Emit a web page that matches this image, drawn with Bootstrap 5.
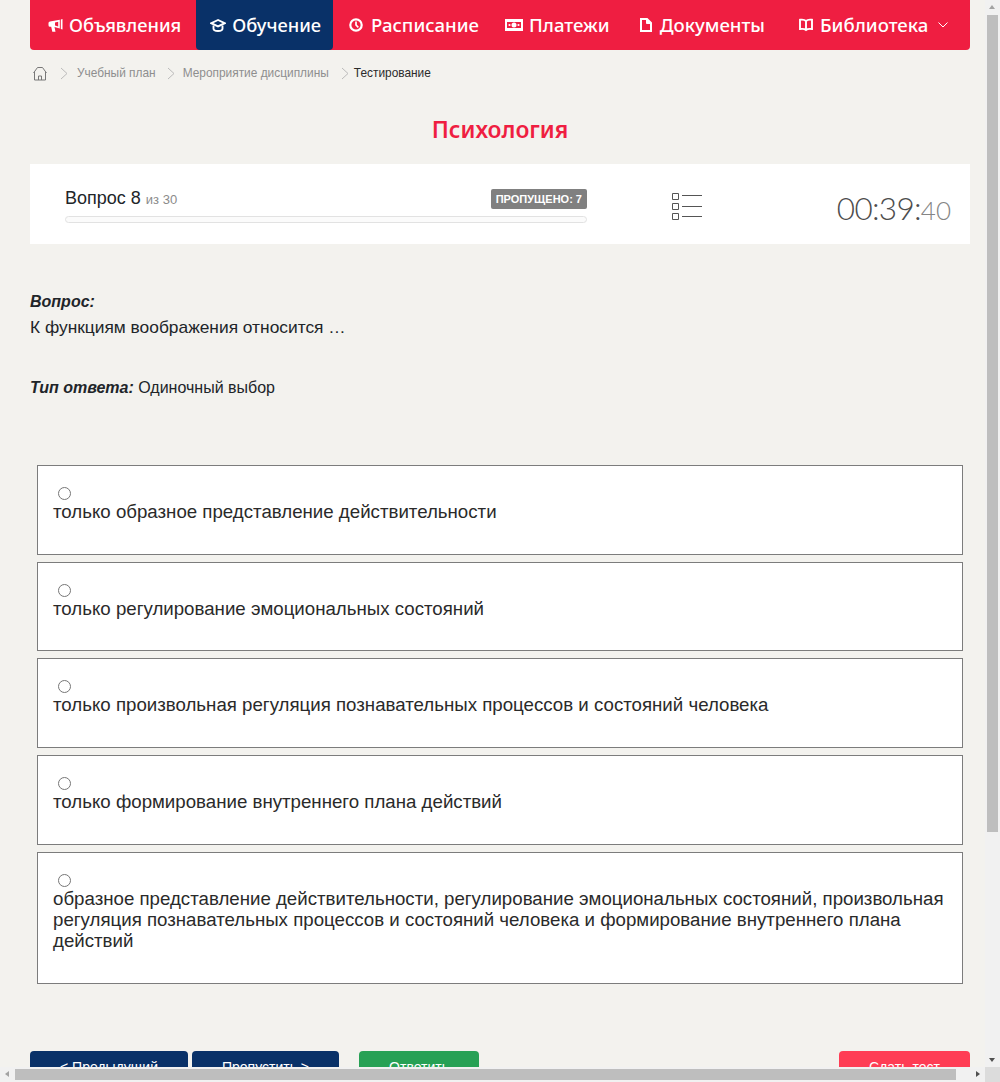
<!DOCTYPE html>
<html lang="ru">
<head>
<meta charset="utf-8">
<title>Тестирование</title>
<link href="https://cdn.jsdelivr.net/npm/bootstrap@5.3.0/dist/css/bootstrap.min.css" rel="stylesheet">
<style>
html,body{background:#f3f2ee;overflow:hidden;height:100%}
body{font-family:"Liberation Sans",Arial,sans-serif;color:#212529}
.pg{width:1000px;height:1082px;overflow:hidden;padding:0 30px}
.topnav{height:50px;background:#ef1e41;border-radius:0 0 4px 4px;padding-left:4px}
.topnav a{display:flex;align-items:center;height:50px;padding:0 14px;color:#fff;text-decoration:none;font:500 18.6px/1 "Noto Sans",sans-serif;border-radius:0 0 4px 4px;white-space:nowrap}
.topnav a svg{flex:none}
.topnav a.tgt{font-size:18.3px;padding-right:15px}
.topnav a.cur{background:#093168;padding-right:12px}
.topnav a.n3{margin-left:2px;padding-right:12px}
.n2{margin-left:2px}.n6{margin-left:6px}
.i6{margin-right:6px}.i7{margin-right:7px}.i8{margin-right:8px}.c10{margin-left:10px}
.crumbs{height:46px;font-size:11.9px;color:#8e8e8e;padding-left:3px}
.crumbs span{padding-top:1px}
.sp1{margin:0 9px 0 13px}.sp2{margin:0 8px 0 11px}.sp3{margin:0 5px 0 12px}
.crumbs .now{color:#2b2b2b}
.ttl{color:#ef1e41;font:600 22.8px/1 "Noto Sans",sans-serif;text-align:center;margin:0;padding:23px 0 22px}
.stat{height:80px;background:#fff;padding:2px 19px 0 35px}
.stat-l{width:522px}
.q-num{font-size:18px;line-height:21px;position:relative;top:1px}
.q-num span{font-size:13px;color:#8b8b8b}
.skip{background:#808080;color:#fff;font-size:11px;font-weight:700;border-radius:2px;padding:0 5px;line-height:20px}
.track{height:7px;border:1px solid #e2e2e2;border-radius:4px;margin-top:7px;background:#fbfbfb}
.timer{font:300 31.5px/1 Lato,sans-serif;color:#4d4d4d;margin-left:auto;margin-top:8px;letter-spacing:-.7px}
.timer span{font-size:26px;color:#858585;letter-spacing:0}
.listico{margin-left:85px;margin-top:3px}
.qtxt{font-size:17.35px;line-height:25px;padding-top:45px}
.qtxt b{font-size:16px}
.qline{display:block;margin-top:1px}
.anstype{font-size:16px;line-height:26px;margin-top:35px}
.opts{padding:0 7px;margin-top:64px}
.opt{background:#fff;border:1px solid #7c7c7c;margin-bottom:7px;padding:21px 15px 0;font-size:18.68px;line-height:21px;height:89.8px;color:#2a2a2a}
.opt.tall{height:132px}
.opt input{display:block;width:13px;height:13px;margin:0 0 0 5px;accent-color:#777}
.opt label{display:block;margin-top:1px}
.acts{margin-top:67px}
.bt{height:34px;border:0;border-radius:4px;color:#fff;font-size:14px;padding:0;display:block}
.bt-n{background:#093168}
.bt-g{background:#27a155;margin-left:20px}
.bt-r{background:#ff3d55}
.w158{width:158px}.w147{width:147px}.w120{width:120px}.w131{width:131px}
.vbar{position:fixed;top:0;right:0;width:15px;height:1067px;background:#f1f1f1}
.vthumb{position:absolute;top:15px;left:2px;width:11px;height:817px;background:#bebebe}
.hbar{position:fixed;left:0;bottom:0;width:985px;height:15px;background:#f1f1f1}
.hthumb{position:absolute;left:15px;top:2px;width:941px;height:11px;background:#bebebe}
.corner{position:fixed;right:0;bottom:0;width:15px;height:15px;background:#dcdcdc}
.tri{position:absolute;width:0;height:0;border-style:solid;border-color:transparent}
.tu{left:4px;top:5px;border-width:0 3.5px 4px;border-bottom-color:#a3a3a3}
.td{left:4px;bottom:5px;border-width:4px 3.5px 0;border-top-color:#505050}
.tl{left:5px;top:4px;border-width:3.5px 4px 3.5px 0;border-right-color:#a3a3a3}
.tr{right:5px;top:4px;border-width:3.5px 0 3.5px 4px;border-left-color:#505050}
</style>
</head>
<body>
<div class="pg">
  <nav class="topnav d-flex">
    <a href="#" class="tgt"><svg class="i6" width="15" height="15" viewBox="0 0 15 15" fill="#fff"><path d="M14.500 1v10.500L12.800 11V1.500zM11.800 1.800v8.600L6.500 9l1 4.800H4.300L3.200 8.800H2A1.500 1.500 0 0 1 .5 7.300V5a1.500 1.500 0 0 1 1.500-1.500zM7 4.500v3l3.200.9V3.700z" fill-rule="evenodd"/></svg>Объявления</a>
    <a href="#" class="tgt cur"><svg class="i6" width="16" height="15" viewBox="0 0 16 15" fill="none" stroke="#fff" stroke-width="1.900"><path d="M8 2 1.300 5.200 8 8.400l6.700-3.200z"/><path d="M3.500 7.500v3.300c0 2.900 9 2.900 9 0V7.500"/></svg>Обучение</a>
    <a href="#" class="n3"><svg class="i8" width="14" height="14" viewBox="0 0 14 14" fill="none" stroke="#fff" stroke-width="2.200"><circle cx="7" cy="7" r="5.700"/><path d="M7 3.500V7l2.300 2.300" stroke-width="1.700"/></svg>Расписание</a>
    <a href="#"><svg class="i6" width="18" height="12" viewBox="0 0 18 12"><path fill="#fff" fill-rule="evenodd" d="M0 0h18v12H0zM2 3v6h14V3z"/><circle cx="9" cy="6" r="2.500" fill="#fff"/><circle cx="4.500" cy="6" r="1.100" fill="#fff"/><circle cx="13.500" cy="6" r="1.100" fill="#fff"/></svg>Платежи</a>
    <a href="#" class="n2"><svg class="i8" width="12" height="14" viewBox="0 0 12 14" fill="none" stroke="#fff" stroke-width="2"><path d="M1 1h6l4 4v8H1z"/><path d="M6.500 .5v5h5" fill="#fff" stroke-width="1"/></svg>Документы</a>
    <a href="#" class="n6"><svg class="i7" width="14" height="14" viewBox="0 0 14 14" fill="none" stroke="#fff" stroke-width="1.900"><path d="M7 3C5.500 1.500 3 1.500 1 1.800V11c2-.3 4.500-.3 6 1 1.500-1.300 4-1.300 6-1V1.800C11 1.500 8.500 1.500 7 3zM7 3v9"/></svg>Библиотека<svg class="c10" width="10" height="6" viewBox="0 0 10 6" fill="none" stroke="#fff"><path d="m.5.500 4.500 4.500L9.500.500"/></svg></a>
  </nav>

  <div class="crumbs d-flex align-items-center">
    <svg width="14" height="15" viewBox="0 0 14 15" fill="none" stroke="#777" stroke-width="1"><path d="M.5 7 4.500 1.500h5L13.500 7M1.500 6v8h11V6M5.500 14v-4h3v4"/></svg>
    <svg class="sp1" width="8" height="13" viewBox="0 0 8 13" fill="none" stroke="#bbb"><path d="m1 1 6 5.500L1 12"/></svg><span>Учебный план</span>
    <svg class="sp2" width="8" height="13" viewBox="0 0 8 13" fill="none" stroke="#bbb"><path d="m1 1 6 5.500L1 12"/></svg><span>Мероприятие дисциплины</span>
    <svg class="sp3" width="8" height="13" viewBox="0 0 8 13" fill="none" stroke="#bbb"><path d="m1 1 6 5.500L1 12"/></svg><span class="now">Тестирование</span>
  </div>

  <h1 class="ttl">Психология</h1>

  <div class="stat d-flex align-items-center">
    <div class="stat-l">
      <div class="d-flex justify-content-between align-items-end">
        <div class="q-num">Вопрос 8 <span>из 30</span></div>
        <div class="skip">ПРОПУЩЕНО: 7</div>
      </div>
      <div class="track"></div>
    </div>
    <svg class="listico" width="31" height="27" viewBox="0 0 31 27" fill="none" stroke="#555"><path d="M.5.500h6v6h-6zM.5 10.500h6v6h-6zM.5 20.500h6v6h-6z"/><path d="M10 2.500h20M10 13.500h20M10 23.500h20"/></svg>
    <div class="timer">00:39:<span>40</span></div>
  </div>

  <div class="qtxt"><b><i>Вопрос:</i></b><span class="qline">К функциям воображения относится …</span></div>
  <div class="anstype"><b><i>Тип ответа:</i></b> Одиночный выбор</div>

  <div class="opts">
    <div class="opt"><input type="radio" name="a" id="a1"><label for="a1">только образное представление действительности</label></div>
    <div class="opt"><input type="radio" name="a" id="a2"><label for="a2">только регулирование эмоциональных состояний</label></div>
    <div class="opt"><input type="radio" name="a" id="a3"><label for="a3">только произвольная регуляция познавательных процессов и состояний человека</label></div>
    <div class="opt"><input type="radio" name="a" id="a4"><label for="a4">только формирование внутреннего плана действий</label></div>
    <div class="opt tall"><input type="radio" name="a" id="a5"><label for="a5">образное представление действительности, регулирование эмоциональных состояний, произвольная регуляция познавательных процессов и состояний человека и формирование внутреннего плана действий</label></div>
  </div>

  <div class="acts d-flex">
    <button class="bt bt-n w158">&lt; Предыдущий</button>
    <button class="bt bt-n w147 ms-1">Пропустить &gt;</button>
    <button class="bt bt-g w120">Ответить</button>
    <button class="bt bt-r w131 ms-auto">Сдать тест</button>
  </div>
</div>

<div class="vbar"><div class="tri tu"></div><div class="vthumb"></div><div class="tri td"></div></div>
<div class="hbar"><div class="tri tl"></div><div class="hthumb"></div><div class="tri tr"></div></div>
<div class="corner"></div>
<script src="https://cdn.jsdelivr.net/npm/bootstrap@5.3.0/dist/js/bootstrap.bundle.min.js"></script>
</body>
</html>
